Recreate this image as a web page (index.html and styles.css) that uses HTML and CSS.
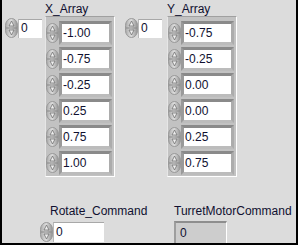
FILE: index.html
```html
<!DOCTYPE html>
<html>
<head>
<meta charset="utf-8">
<link rel="stylesheet" href="styles.css">
</head>
<body>
<div class="panel">
  <div class="top">
    <div class="group group-x">
      <div class="index">
        <svg class="spin" viewBox="0 0 13 20"><use href="#spinner"/></svg>
        <div class="ibox">0</div>
      </div>
      <div class="arr">
        <div class="label">X_Array</div>
        <div class="frame">
          <div class="el"><svg class="espin" viewBox="0 0 13 20"><use href="#spinner"/></svg><div class="ebox">-1.00</div></div>
          <div class="el"><svg class="espin" viewBox="0 0 13 20"><use href="#spinner"/></svg><div class="ebox">-0.75</div></div>
          <div class="el"><svg class="espin" viewBox="0 0 13 20"><use href="#spinner"/></svg><div class="ebox">-0.25</div></div>
          <div class="el"><svg class="espin" viewBox="0 0 13 20"><use href="#spinner"/></svg><div class="ebox">0.25</div></div>
          <div class="el"><svg class="espin" viewBox="0 0 13 20"><use href="#spinner"/></svg><div class="ebox">0.75</div></div>
          <div class="el"><svg class="espin" viewBox="0 0 13 20"><use href="#spinner"/></svg><div class="ebox">1.00</div></div>
        </div>
      </div>
    </div>
    <div class="group group-y">
      <div class="index">
        <svg class="spin" viewBox="0 0 13 20"><use href="#spinner"/></svg>
        <div class="ibox">0</div>
      </div>
      <div class="arr">
        <div class="label">Y_Array</div>
        <div class="frame">
          <div class="el"><svg class="espin" viewBox="0 0 13 20"><use href="#spinner"/></svg><div class="ebox">-0.75</div></div>
          <div class="el"><svg class="espin" viewBox="0 0 13 20"><use href="#spinner"/></svg><div class="ebox">-0.25</div></div>
          <div class="el"><svg class="espin" viewBox="0 0 13 20"><use href="#spinner"/></svg><div class="ebox">0.00</div></div>
          <div class="el"><svg class="espin" viewBox="0 0 13 20"><use href="#spinner"/></svg><div class="ebox">0.00</div></div>
          <div class="el"><svg class="espin" viewBox="0 0 13 20"><use href="#spinner"/></svg><div class="ebox">0.25</div></div>
          <div class="el"><svg class="espin" viewBox="0 0 13 20"><use href="#spinner"/></svg><div class="ebox">0.75</div></div>
        </div>
      </div>
    </div>
  </div>
  <div class="bottom">
    <div class="ctl ctl-rotate">
      <div class="label label-rotate">Rotate_Command</div>
      <div class="index">
        <svg class="spin" viewBox="0 0 13 20"><use href="#spinner"/></svg>
        <div class="ibox wide">0</div>
      </div>
    </div>
    <div class="ctl ctl-turret">
      <div class="label">TurretMotorCommand</div>
      <div class="ind">0</div>
    </div>
  </div>
</div>
<svg width="0" height="0" class="defs">
  <defs>
    <linearGradient id="sg" x1="0" y1="0" x2="1" y2="0">
      <stop offset="0" stop-color="#a8a8a8"/>
      <stop offset="0.45" stop-color="#dedede"/>
      <stop offset="1" stop-color="#929292"/>
    </linearGradient>
    <g id="spinner">
      <rect x="0.5" y="0.5" width="12" height="19" rx="6" ry="7" fill="url(#sg)" stroke="#999"/>
      <line x1="1" y1="10" x2="12" y2="10" stroke="#8a8a8a"/>
      <path d="M6.5 3 L9 8 L4 8 Z" fill="#eeeeee" stroke="#707070" stroke-width="0.8"/>
      <path d="M6.5 17 L9 12 L4 12 Z" fill="#eeeeee" stroke="#707070" stroke-width="0.8"/>
    </g>
  </defs>
</svg>
</body>
</html>
```
FILE: styles.css
```css
* { box-sizing: border-box; }
html, body { margin: 0; padding: 0; background: #dcdcdc; }
body { font-family: "Liberation Sans", Arial, sans-serif; font-size: 12px; color: #101030; }
.defs { position: absolute; width: 0; height: 0; }
.panel {
  width: 298px; height: 245px;
  background: #dcdcdc;
  border: 2px solid #000; border-top: 0;
  display: flex; flex-direction: column;
  overflow: hidden;
}
.top { display: flex; align-items: flex-start; height: 177px; }
.group { display: flex; align-items: flex-start; }
.group-x { margin-left: 3px; }
.group-y { margin-left: 10px; }
.group-y .arr { margin-left: 5px; }
.index { display: flex; align-items: center; margin-top: 18px; }
.spin { width: 13px; height: 20px; display: block; }
.ibox {
  width: 24px; height: 19px; background: #fff;
  border-top: 1px solid #a8a8a8; border-left: 1px solid #b8b8b8;
  padding-left: 2px; line-height: 17px;
}
.arr { display: flex; flex-direction: column; margin-left: 3px; padding-top: 2px; }
.label { line-height: 14px; height: 14px; white-space: nowrap; }
.frame {
  width: 70px;
  background: #c2c2c2;
  border-top: 1px solid #a0a0a0; border-left: 1px solid #e6e6e6;
  border-right: 1px solid #fff; border-bottom: 1px solid #fff;
  padding: 4px 2px 1px 0;
  display: flex; flex-direction: column; gap: 2px;
}
.el { display: flex; align-items: center; height: 24px; }
.espin { width: 13px; height: 22px; display: block; }
.ebox {
  width: 53px; height: 24px; background: #fff;
  border-top: 3px solid #8a8a8a; border-left: 3px solid #9a9a9a;
  border-right: 3px solid #acacac; border-bottom: 3px solid #bcbcbc;
  padding-left: 1px; line-height: 18px;
}
.bottom { display: flex; align-items: flex-start; margin-top: 27px; }
.ctl { display: flex; flex-direction: column; }
.ctl-rotate { margin-left: 38px; width: 134px; }
.label-rotate { margin-left: 10px; }
.ctl .index { margin-top: 4px; }
.ibox.wide { width: 51px; height: 20px; line-height: 18px; }
.ctl-turret { margin-left: 0; }
.ind {
  margin-top: 3px; width: 53px; height: 22px;
  background: #cdcdcd;
  border-top: 2px solid #8e8e8e; border-left: 2px solid #9e9e9e;
  border-right: 1px solid #fff;
  padding-left: 4px; line-height: 20px;
}
```
